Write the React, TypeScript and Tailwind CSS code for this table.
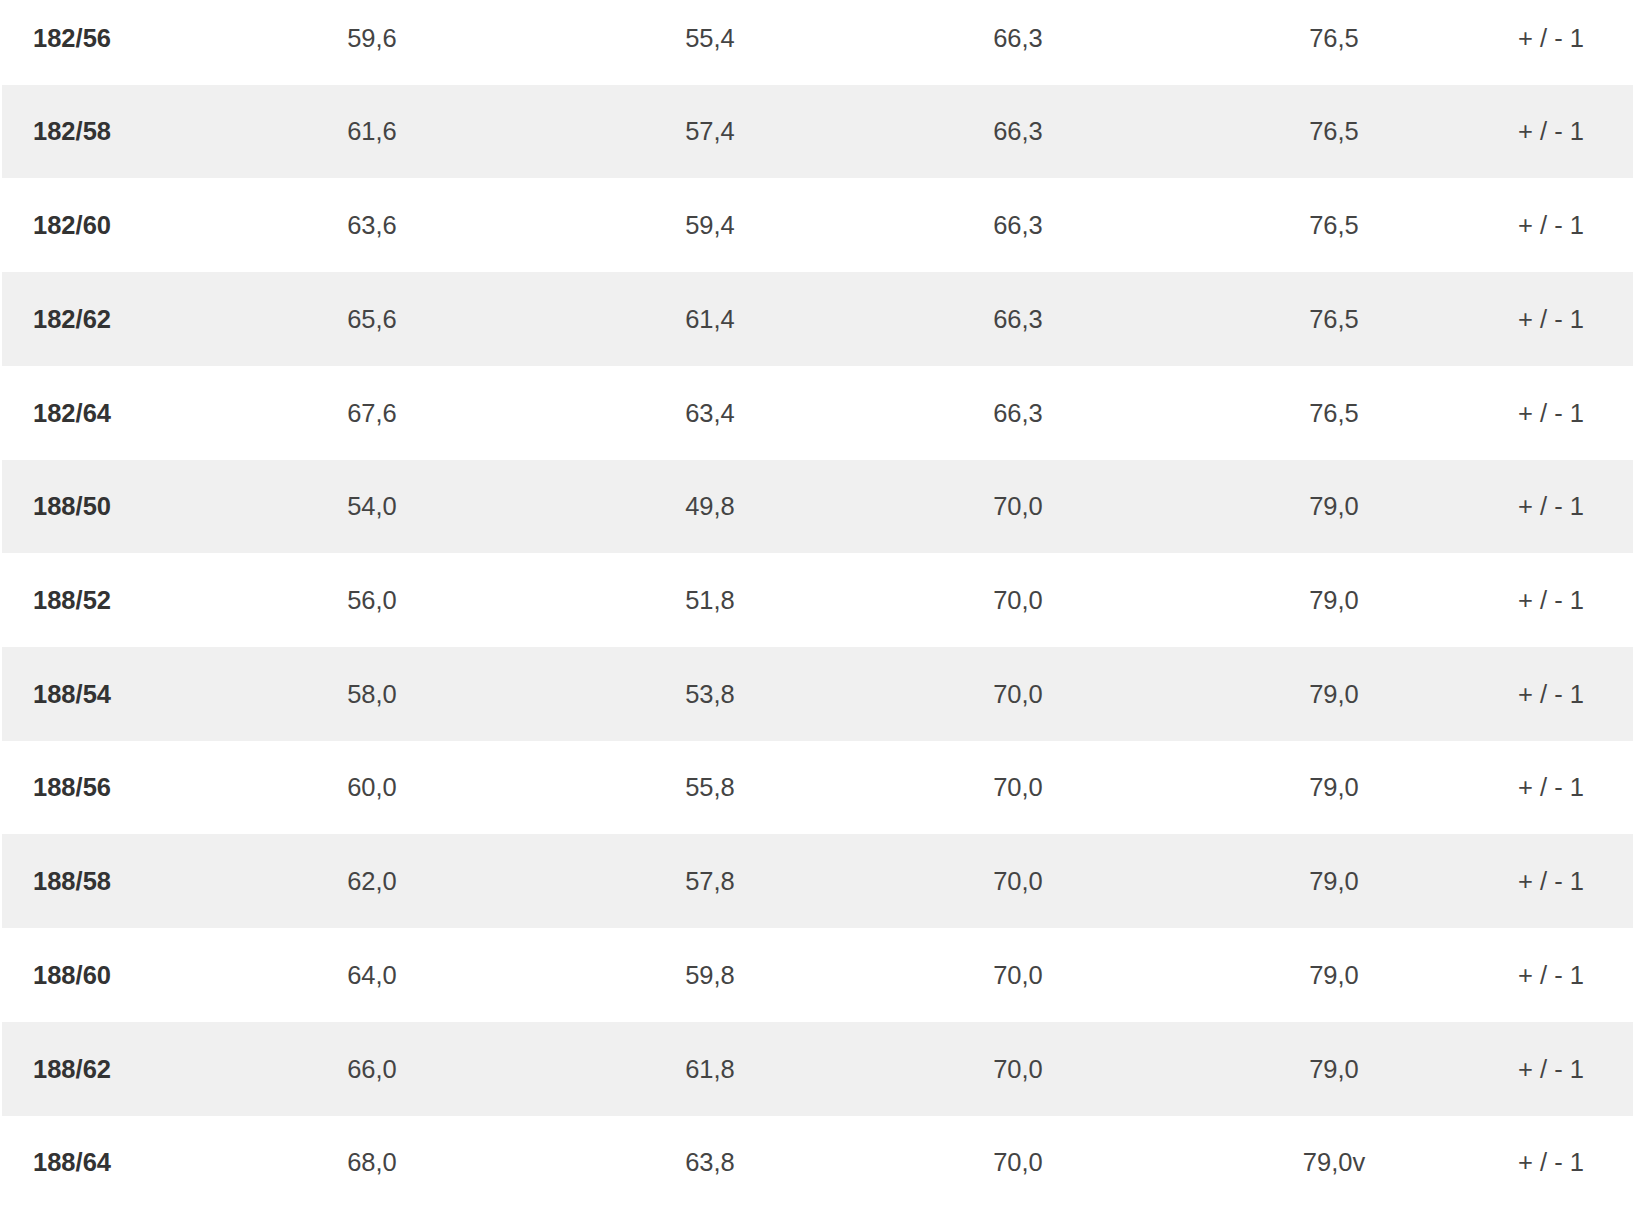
const ROWS: string[][] = [
  ['182/56', '59,6', '55,4', '66,3', '76,5', '+ / - 1'],
  ['182/58', '61,6', '57,4', '66,3', '76,5', '+ / - 1'],
  ['182/60', '63,6', '59,4', '66,3', '76,5', '+ / - 1'],
  ['182/62', '65,6', '61,4', '66,3', '76,5', '+ / - 1'],
  ['182/64', '67,6', '63,4', '66,3', '76,5', '+ / - 1'],
  ['188/50', '54,0', '49,8', '70,0', '79,0', '+ / - 1'],
  ['188/52', '56,0', '51,8', '70,0', '79,0', '+ / - 1'],
  ['188/54', '58,0', '53,8', '70,0', '79,0', '+ / - 1'],
  ['188/56', '60,0', '55,8', '70,0', '79,0', '+ / - 1'],
  ['188/58', '62,0', '57,8', '70,0', '79,0', '+ / - 1'],
  ['188/60', '64,0', '59,8', '70,0', '79,0', '+ / - 1'],
  ['188/62', '66,0', '61,8', '70,0', '79,0', '+ / - 1'],
  ['188/64', '68,0', '63,8', '70,0', '79,0v', '+ / - 1'],
];

export default function App() {
  return (
    <div className="h-[1223px] overflow-hidden bg-white font-['Liberation_Sans',Arial,sans-serif] text-[25.5px]">
      <div className="-mt-[9px] ml-[2px] w-[1631px]">
        {ROWS.map((row, i) => (
          <div
            key={row[0]}
            className={`grid h-[93.73px] grid-cols-[159px_422px_254px_362px_270px_164px] items-center ${
              i % 2 === 1 ? 'bg-[#f0f0f0]' : 'bg-white'
            }`}
          >
            <div className="pl-[31px] font-bold text-[#333]">{row[0]}</div>
            {row.slice(1).map((cell, j) => (
              <div key={j} className="text-center text-[#444]">
                {cell}
              </div>
            ))}
          </div>
        ))}
      </div>
    </div>
  );
}
